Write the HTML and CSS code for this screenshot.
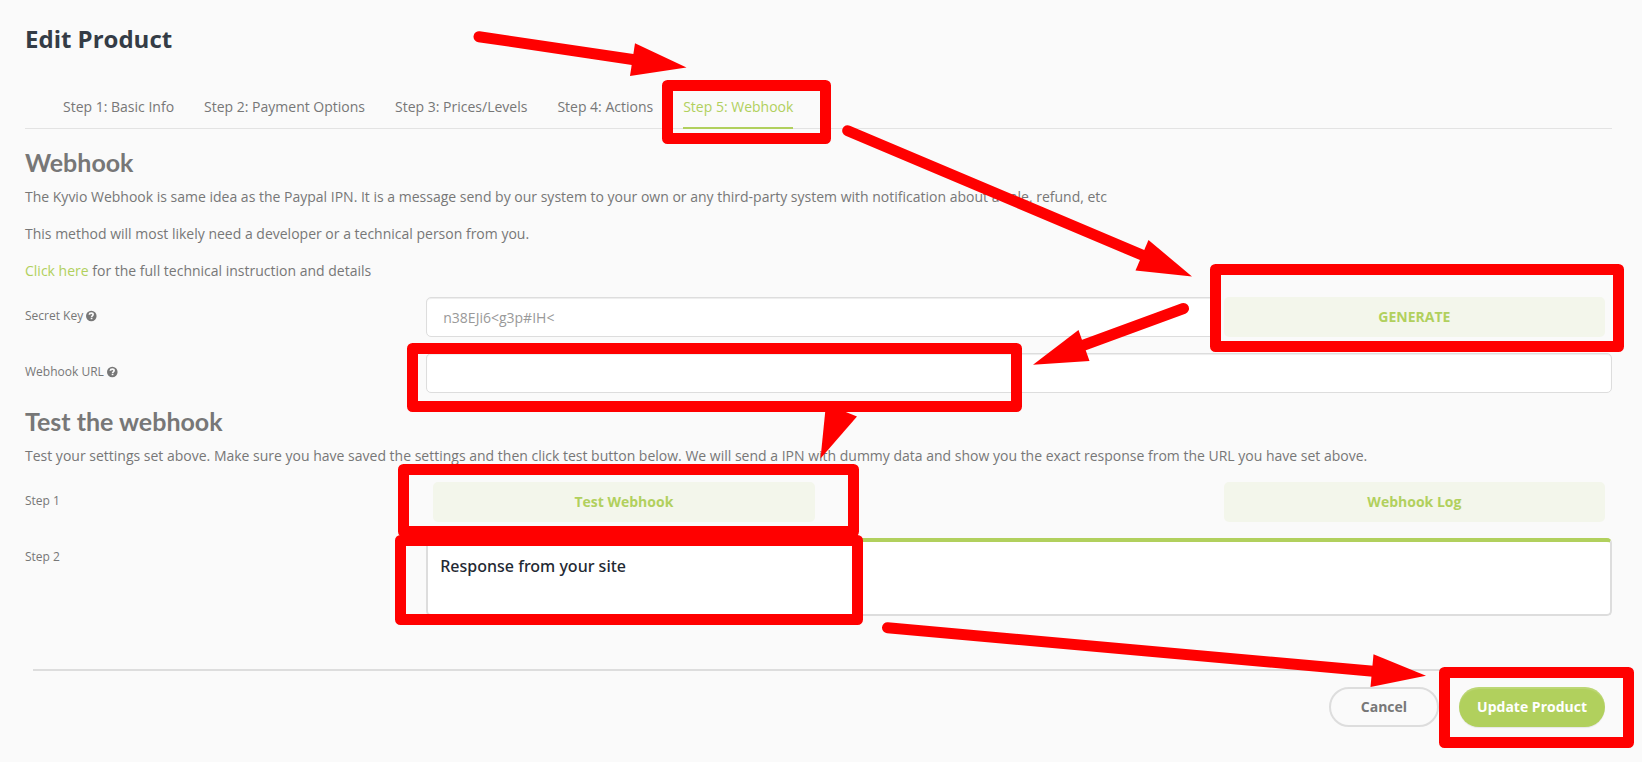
FILE: index.html
```html
<!DOCTYPE html>
<html lang="en">
<head>
<meta charset="utf-8">
<title>Edit Product</title>
<link rel="stylesheet" href="styles.css">
</head>
<body>
<svg class="defs" width="0" height="0" aria-hidden="true">
  <symbol id="help" viewBox="0 0 12 12">
    <circle cx="6.300" cy="6" r="5.300" fill="currentColor"/>
    <path d="M4.300 4.800C4.400 3.500 5.200 3.100 6.300 3.100c1.100 0 1.800.6 1.800 1.500 0 1.200-1.500 1.200-1.500 2.400" fill="none" stroke="#fafafa" stroke-width="1.700"/>
    <path d="M5.700 7.700h1.700v1.500H5.700z" fill="#fafafa"/>
  </symbol>
</svg>
<main class="page">
  <h1 class="title">Edit Product</h1>
  <nav class="tabs">
    <a class="tab" href="#basic">Step 1: Basic Info</a>
    <a class="tab" href="#payment">Step 2: Payment Options</a>
    <a class="tab" href="#prices">Step 3: Prices/Levels</a>
    <a class="tab" href="#actions">Step 4: Actions</a>
    <a class="tab tab-active" href="#webhook">Step 5: Webhook</a>
  </nav>
  <form class="form">
    <h2 class="heading">Webhook</h2>
    <p class="text">The Kyvio Webhook is same idea as the Paypal IPN. It is a message send by our system to your own or any third-party system with notification about a sale, refund, etc</p>
    <p class="text">This method will most likely need a developer or a technical person from you.</p>
    <p class="text"><a class="link" href="#docs">Click here</a> for the full technical instruction and details</p>
    <div class="row">
      <label class="label" for="secret">Secret Key <svg class="help"><use href="#help"/></svg></label>
      <div class="fields">
        <input class="input span-two" id="secret" type="text" value="n38EJi6&lt;g3p#IH&lt;">
        <button class="soft-button last" type="button">GENERATE</button>
      </div>
    </div>
    <div class="row">
      <label class="label" for="url">Webhook URL <svg class="help"><use href="#help"/></svg></label>
      <input class="input" id="url" type="text">
    </div>
    <h2 class="heading">Test the webhook</h2>
    <p class="text">Test your settings set above. Make sure you have saved the settings and then click test button below. We will send a IPN with dummy data and show you the exact response from the URL you have set above.</p>
    <div class="row">
      <span class="label">Step 1</span>
      <div class="fields">
        <button class="soft-button" type="button">Test Webhook</button>
        <button class="soft-button last" type="button">Webhook Log</button>
      </div>
    </div>
    <div class="row">
      <label class="label" for="response">Step 2</label>
      <textarea class="response" id="response">Response from your site</textarea>
    </div>
    <div class="footer">
      <button class="pill" type="button">Cancel</button>
      <button class="pill pill-primary" type="submit">Update Product</button>
    </div>
  </form>
</main>
<svg class="marks" width="1642" height="762" viewBox="0 0 1642 762" aria-hidden="true">
  <g class="boxes">
    <rect x="667.500" y="85.500" width="158" height="53"/>
    <rect x="1215.500" y="269.500" width="403" height="77"/>
    <rect x="412.500" y="348.500" width="604" height="58"/>
    <rect x="403.500" y="469.500" width="450" height="62"/>
    <rect x="400.500" y="540.500" width="457" height="79"/>
    <rect x="1444.500" y="672.500" width="184" height="70"/>
  </g>
  <g class="shafts">
    <path d="M479 36.700 636 60"/>
    <path d="M847.700 130.700 1148 257.500"/>
    <path d="M1183.500 308.500 1080 346.500"/>
    <path d="M887.500 627.700 1376 671.500"/>
  </g>
  <g class="heads">
    <path d="M635 43.300 686.500 67.500 630 76z"/>
    <path d="M1148.500 240 1192 276.500 1135.500 270.500z"/>
    <path d="M1078.500 330 1033 364.700 1089.500 361z"/>
    <path d="M826 404 857 416.500 820.500 458.500z"/>
    <path d="M1373.500 654.300 1426 675.700 1370.500 687z"/>
  </g>
</svg>
</body>
</html>
```
FILE: styles.css
```css
* {
  box-sizing: border-box;
}

body {
  margin: 0;
  background: #fafafa;
  color: #777;
  font: 14px/22px "Open Sans", "Noto Sans", sans-serif;
}

.defs {
  position: absolute;
}

.page {
  padding: 22px 30px 34px 25px;
}

.title {
  margin: 0;
  color: #343c46;
  font-size: 24px;
  font-weight: 700;
  line-height: 34px;
}

.tabs {
  display: flex;
  gap: 30px;
  margin-top: 40px;
  margin-bottom: 19px;
  padding-left: 38px;
  border-bottom: 1px solid #e3e3e3;
}

.tab {
  height: 32px;
  color: inherit;
  text-decoration: none;
}

.tab-active {
  height: 33px;
  margin-bottom: -1px;
  border-bottom: 2px solid #b1d05d;
  color: #b1d05d;
}

.heading {
  margin: 14px 0 10px;
  font: 700 25px/28px Lato, sans-serif;
}

.text {
  margin: 0 0 15px;
}

.link {
  color: #b1d05d;
  text-decoration: none;
}

.row {
  display: grid;
  grid-template-columns: 1fr 3fr;
  gap: 6px;
}

.row + .row {
  margin-top: 16px;
}

.label {
  padding-top: 8px;
  font-size: 12px;
}

.help {
  width: 12px;
  height: 12px;
  margin-left: -1px;
  vertical-align: -2px;
}

.fields {
  display: grid;
  grid-template-columns: repeat(3, 1fr);
}

.span-two {
  grid-column: span 2;
}

.input {
  width: 100%;
  height: 40px;
  padding: 0 16px;
  border: 1px solid #ddd;
  border-radius: 5px;
  background: #fff;
  box-shadow: inset 0 1px 1px rgba(0, 0, 0, .075);
  color: #999;
  font: inherit;
}

.soft-button {
  height: 40px;
  margin: 0 7px;
  border: 0;
  border-radius: 5px;
  background: #f3f6eb;
  color: #b1d05d;
  font: inherit;
  font-weight: 700;
}

.last {
  grid-column: 3;
}

.response {
  display: block;
  width: 100%;
  height: 78px;
  padding: 12px;
  border: 2px solid #ddd;
  border-top: 4px solid #b1d05d;
  border-radius: 5px;
  background: #fff;
  color: #1f2933;
  font: 500 16px/24px "Noto Sans", sans-serif;
  resize: none;
}

.footer {
  display: flex;
  justify-content: flex-end;
  gap: 20px;
  margin: 53px 7px 0 8px;
  padding-top: 16px;
  border-top: 2px solid #ddd;
}

.pill {
  height: 40px;
  padding: 0 30px;
  border: 2px solid #ddd;
  border-radius: 20px;
  background: transparent;
  color: #777;
  font: inherit;
  font-weight: 700;
}

.pill-primary {
  padding: 0 18px;
  border: 0;
  background: #b1d05d;
  box-shadow: inset 0 2px 1px rgba(255, 255, 255, .15), 0 1px 1px rgba(0, 0, 0, .08);
  color: #fff;
}

.marks {
  position: absolute;
  top: 0;
  left: 0;
  pointer-events: none;
}

.boxes,
.shafts {
  fill: none;
  stroke: #f00;
  stroke-width: 11px;
  stroke-linecap: round;
  stroke-linejoin: round;
}

.heads {
  fill: #f00;
}
```
